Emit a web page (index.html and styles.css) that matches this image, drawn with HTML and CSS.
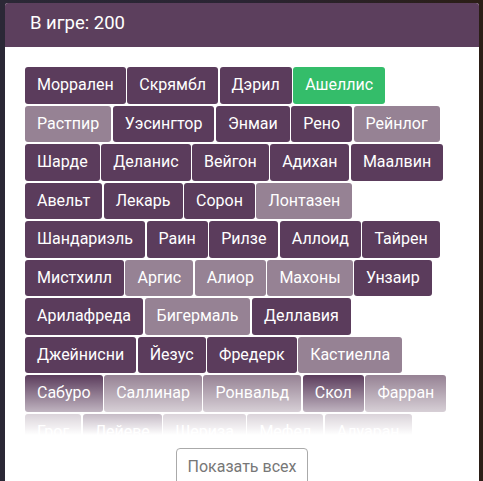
FILE: index.html
```html
<!doctype html>
<html>
<head>
<meta charset="utf-8">
<title>В игре</title>
<link rel="stylesheet" href="styles.css">
</head>

<body>
<div class="panel">
	<div class="panel-hd">В игре: 200</div>
    <div class="panel-bd">
    	<ul class="tags clear">
            <li class="tag">Моррален</li>
            <li class="tag">Скрямбл</li>
            <li class="tag">Дэрил</li>
            <li class="tag gr">Ашеллис</li>
            <li class="tag lt">Растпир</li>
            <li class="tag">Уэсингтор</li>
            <li class="tag">Энмаи</li>
            <li class="tag">Рено</li>
            <li class="tag lt">Рейнлог</li>
            <li class="tag">Шарде</li>
            <li class="tag">Деланис</li>
            <li class="tag">Вейгон</li>
            <li class="tag">Адихан</li>
            <li class="tag">Маалвин</li>
            <li class="tag">Авельт</li>
            <li class="tag">Лекарь</li>
            <li class="tag">Сорон</li>
            <li class="tag lt">Лонтазен</li>
            <li class="tag">Шандариэль</li>
            <li class="tag">Раин</li>
            <li class="tag">Рилзе</li>
            <li class="tag">Аллоид</li>
            <li class="tag">Тайрен</li>
            <li class="tag">Мистхилл</li>
            <li class="tag lt">Аргис</li>
            <li class="tag lt">Алиор</li>
            <li class="tag lt">Махоны</li>
            <li class="tag">Унзаир</li>
            <li class="tag">Арилафреда</li>
            <li class="tag lt">Бигермаль</li>
            <li class="tag">Деллавия</li>
            <li class="tag">Джейнисни</li>
            <li class="tag">Йезус</li>
            <li class="tag">Фредерк</li>
            <li class="tag lt">Кастиелла</li>
            <li class="tag">Сабуро</li>
            <li class="tag lt">Саллинар</li>
            <li class="tag lt">Ронвальд</li>
            <li class="tag">Скол</li>
            <li class="tag lt">Фарран</li>
            <li class="tag lt">Грог</li>
            <li class="tag">Лейеве</li>
            <li class="tag lt">Шериза</li>
            <li class="tag lt">Мефел</li>
            <li class="tag lt">Алуаран</li>
            <li class="tag">Тирен</li>
            <li class="tag lt">Орвальд</li>
            <li class="tag">Миранда</li>
        </ul>
        <div class="more-box">
        	<input type="button" value="Показать всех" class="more-btn">
        </div>
    </div>
</div>
</body>
</html>
```

FILE: styles.css
```css
body,ul,li,input{margin:0;padding:0;}
li{ list-style:none;}
.clear:after{ content:''; display:block; clear:both; }

body{ padding:3px 4px 0 5px; height:478px; overflow:hidden; background:linear-gradient(90deg,#2b2836,#2a2433 50%,#2b1e16); font-family:Roboto,"Noto Sans",Arial,sans-serif;}
.panel{ background:#fff; height:478px; border-radius:3px 3px 0 0; overflow:hidden;}
.panel-hd{ height:24px; padding:8px 25px 12px; background:#5c3f5d; color:#fff; font-size:18.5px; line-height:24px;}
.panel-bd{ padding:20px;}
.tags{ max-height:368px; overflow:hidden; position:relative;}
.tags:after{ position:absolute; left:0; right:0; top:308px; height:60px; background:linear-gradient(rgba(255,255,255,0),#fff);}
.tag{ float:left; margin:0 1.5px 2px 0; padding:7px 12px; line-height:22.5px; font-size:16px; color:#fff; background:#5b3c5c; border-radius:3px;}
.tag.lt{ background:#968294;}
.tag.gr{ background:#34bd6a;}
.more-box{ margin-top:13px; text-align:center;}
.more-btn{ height:37px; padding:0 11px; font-family:inherit; font-size:16px; color:#777; background:#fff; border:1px solid #aaa; border-radius:4px;}
```
